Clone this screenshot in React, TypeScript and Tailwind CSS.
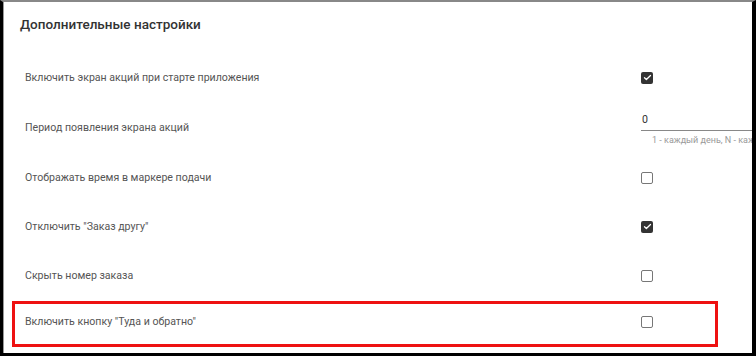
import React from "react";

type Row =
  | { kind: "check"; label: string; checked: boolean; h: string }
  | { kind: "input"; label: string; value: string; hint: string; h: string };

const rows: Row[] = [
  { kind: "check", label: "Включить экран акций при старте приложения", checked: true, h: "h-[49px]" },
  { kind: "input", label: "Период появления экрана акций", value: "0", hint: "1 - каждый день, N - каждый N-й день", h: "h-[51px]" },
  { kind: "check", label: "Отображать время в маркере подачи", checked: false, h: "h-[49px]" },
  { kind: "check", label: "Отключить \"Заказ другу\"", checked: true, h: "h-[49px]" },
  { kind: "check", label: "Скрыть номер заказа", checked: false, h: "h-[49px]" },
];

function Checkbox({ checked }: { checked: boolean }) {
  if (checked) {
    return (
      <div className="w-[12px] h-[12px] shrink-0 rounded-[2px] bg-[#333] flex items-center justify-center">
        <svg width="9" height="9" viewBox="0 0 24 24" fill="none">
          <path d="M4 12.5l5 5L20 6.5" stroke="#fff" strokeWidth="3.5" strokeLinecap="round" strokeLinejoin="round" />
        </svg>
      </div>
    );
  }
  return <div className="w-[12px] h-[12px] shrink-0 rounded-[2px] border-[1.5px] border-[#777] bg-white" />;
}

function SettingRow({ row }: { row: Row }) {
  return (
    <div className={`${row.h} flex items-center pl-[13px]`}>
      <div className="w-[616px] shrink-0 text-[10.6px] text-[#555]">{row.label}</div>
      {row.kind === "check" ? (
        <Checkbox checked={row.checked} />
      ) : (
        <div className="w-[140px] shrink-0 pt-[5px]">
          <div className="text-[10.6px] text-[#333] pl-[1px] pb-[2px] border-b border-[#888]">{row.value}</div>
          <div className="text-[9px] text-[#999] pl-[11px] mt-[3px] whitespace-nowrap">{row.hint}</div>
        </div>
      )}
    </div>
  );
}

export default function App() {
  return (
    <div
      className="w-[756px] h-[356px] bg-white overflow-hidden border-l-[3px] border-r-[4px] border-b-[3px] border-t-[2px] border-l-black border-r-black border-b-black border-t-[#888]"
      style={{ fontFamily: "Roboto, 'Noto Sans', sans-serif" }}
    >
      <div className="h-full border-l border-[#999] overflow-hidden">
        <div className="pl-[16px] pt-[12px] h-[51px] text-[13.5px] font-medium text-[#333]">
          Дополнительные настройки
        </div>
        <div className="ml-[8px] w-[706px]">
          {rows.map((r, i) => (
            <SettingRow key={i} row={r} />
          ))}
          <div className="mt-[1px] h-[46px] border-[3px] border-[#ee1111] flex items-center pl-[10px] pb-[4px]">
            <div className="w-[616px] shrink-0 text-[10.6px] text-[#555]">Включить кнопку "Туда и обратно"</div>
            <Checkbox checked={false} />
          </div>
        </div>
      </div>
    </div>
  );
}
